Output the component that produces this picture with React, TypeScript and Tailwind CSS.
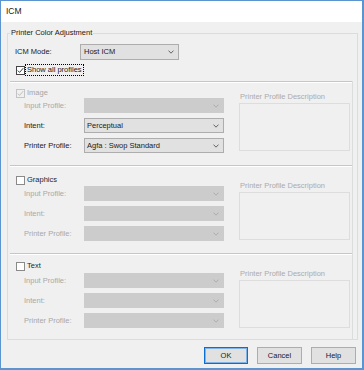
import React from 'react';

interface Row {
  label: string;
  value: string;
  enabled: boolean;
}

interface Section {
  id: string;
  name: string;
  checked: boolean;
  disabled: boolean;
  box: string;
  cbTop: string;
  rowsTop: string;
  descTop: string;
  rows: Row[];
}

const sections: Section[] = [
  {
    id: 'image',
    name: 'Image',
    checked: true,
    disabled: true,
    box: 'h-[84px]',
    cbTop: 'mt-[5px]',
    rowsTop: 'mt-0',
    descTop: 'mt-[9px]',
    rows: [
      { label: 'Input Profile:', value: '', enabled: false },
      { label: 'Intent:', value: 'Perceptual', enabled: true },
      { label: 'Printer Profile:', value: 'Agfa : Swop Standard', enabled: true },
    ],
  },
  {
    id: 'graphics',
    name: 'Graphics',
    checked: false,
    disabled: false,
    box: 'h-[88px]',
    cbTop: 'mt-[8px]',
    rowsTop: 'mt-[1px]',
    descTop: 'mt-[14px]',
    rows: [
      { label: 'Input Profile:', value: '', enabled: false },
      { label: 'Intent:', value: '', enabled: false },
      { label: 'Printer Profile:', value: '', enabled: false },
    ],
  },
  {
    id: 'text',
    name: 'Text',
    checked: false,
    disabled: false,
    box: 'flex-1',
    cbTop: 'mt-[6px]',
    rowsTop: 'mt-[2px]',
    descTop: 'mt-[14px]',
    rows: [
      { label: 'Input Profile:', value: '', enabled: false },
      { label: 'Intent:', value: '', enabled: false },
      { label: 'Printer Profile:', value: '', enabled: false },
    ],
  },
];

function Chevron({ color }: { color: string }) {
  return (
    <svg width="6" height="4" viewBox="0 0 6 4" className="shrink-0">
      <path d="M0.5 0.6L3 3.2L5.5 0.6" fill="none" stroke={color} strokeWidth="0.9" />
    </svg>
  );
}

function Select({ value, enabled, className }: { value: string; enabled: boolean; className: string }) {
  return (
    <div
      className={`${className} flex items-center justify-between pl-[2px] pr-[4px] border ${
        enabled ? 'bg-[#e1e1e1] border-[#adadad]' : 'bg-[#cccccc] border-[#cccccc]'
      }`}
    >
      <span className="whitespace-nowrap">{value}</span>
      <Chevron color={enabled ? '#555555' : '#a9a9a9'} />
    </div>
  );
}

function CheckBox({ checked, disabled }: { checked: boolean; disabled: boolean }) {
  return (
    <div
      className={`w-[9px] h-[9px] shrink-0 border flex items-center justify-center ${
        disabled ? 'border-[#c4c4c4] bg-[#f0f0f0]' : checked ? 'border-[#444444] bg-white' : 'border-[#8a8a8a] bg-white'
      }`}
    >
      {checked && (
        <svg width="7" height="7" viewBox="0 0 7 7">
          <path d="M0.8 3.6L2.6 5.4L6.2 1.2" fill="none" stroke={disabled ? '#b8b8b8' : '#222222'} strokeWidth="0.9" />
        </svg>
      )}
    </div>
  );
}

function ProfileSection({ s }: { s: Section }) {
  return (
    <div className={`${s.box} flex flex-col`}>
      <div className="h-[2px] border-t border-[#c6c6c6] bg-white" />
      <div className="flex items-start">
        <div className="flex flex-col w-[214px]">
          <div className={`${s.cbTop} h-[10px] flex items-center pl-[6px] gap-[2px]`}>
            <CheckBox checked={s.checked} disabled={s.disabled} />
            <span className={s.disabled ? 'text-[#a6a6a6]' : 'text-[#262626]'}>{s.name}</span>
          </div>
          <div className={`${s.rowsTop} flex flex-col gap-[5px] pl-[14px]`}>
            {s.rows.map((r) => (
              <div key={r.label} className="flex items-center h-[15px]">
                <span className={`w-[60px] whitespace-nowrap ${r.enabled ? 'text-[#1a1a1a]' : 'text-[#a8a8a8]'}`}>
                  {r.label}
                </span>
                <Select value={r.value} enabled={r.enabled} className="w-[140px] h-[15px]" />
              </div>
            ))}
          </div>
        </div>
        <div className={`${s.descTop} ml-[15px] flex flex-col`}>
          <div className="h-[10px] leading-[10px] pl-[1px] text-[#ababab] whitespace-nowrap">
            Printer Profile Description
          </div>
          <div className="mt-[1px] w-[111px] h-[48px] border border-[#dddddd]" />
        </div>
      </div>
    </div>
  );
}

export default function App() {
  return (
    <div className="w-[364px] h-[370px] flex flex-col border-t border-l border-r-2 border-b-2 border-[#5c94cf] bg-[#f0f0f0] font-['Liberation_Sans',Arial,sans-serif] text-[7.5px] text-[#1a1a1a] overflow-hidden">
      <div className="h-[21px] shrink-0 bg-white flex items-center pl-[5px] text-[8.5px]">ICM</div>

      <div className="flex-1 flex flex-col">
        <div className="relative mt-[11px] ml-[6px] w-[351px] h-[307px] border border-[#dcdcdc] flex flex-col">
          <span className="absolute left-[2px] top-[-7px] px-[1px] leading-[12px] bg-[#f0f0f0]">
            Printer Color Adjustment
          </span>

          <div className="mt-[10px] h-[16px] flex items-center pl-[7px]">
            <span className="w-[65px]">ICM Mode:</span>
            <div className="w-[99px] h-[16px] flex items-center justify-between pl-[3px] pr-[4px] border border-[#adadad] bg-[#e1e1e1]">
              <span>Host ICM</span>
              <Chevron color="#555555" />
            </div>
          </div>

          <div className="mt-[4px] h-[12px] flex items-center pl-[8px]">
            <CheckBox checked disabled={false} />
            <span className="h-[12px] leading-[10px] px-[1px] border border-dotted border-black">
              Show all profiles
            </span>
          </div>

          <div className="mt-[5px] ml-[2px] w-[343px] flex-1 flex flex-col border-r border-[#dcdcdc]">
            {sections.map((s) => (
              <ProfileSection key={s.id} s={s} />
            ))}
          </div>
        </div>

        <div className="mt-[7px] pl-[203px] flex gap-[9px]">
          <button className="w-[44px] h-[17px] bg-[#e1e1e1] border border-[#0a6fd1] shadow-[inset_0_0_0_1px_#7fb2e6]">
            OK
          </button>
          <button className="w-[45px] h-[17px] bg-[#e1e1e1] border border-[#adadad]">Cancel</button>
          <button className="w-[45px] h-[17px] bg-[#e1e1e1] border border-[#adadad]">Help</button>
        </div>
      </div>
    </div>
  );
}
